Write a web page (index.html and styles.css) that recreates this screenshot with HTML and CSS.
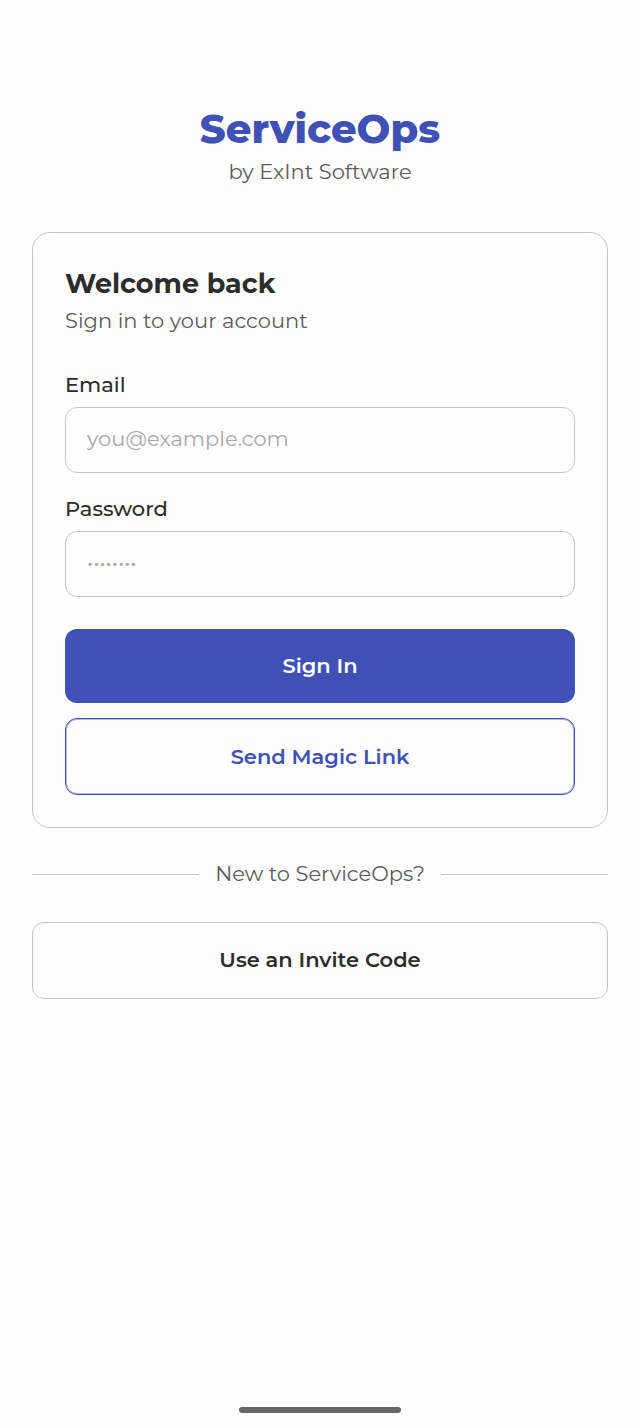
FILE: index.html
```html
<!DOCTYPE html>
<html lang="en">
<head>
<meta charset="utf-8">
<meta name="viewport" content="width=device-width, initial-scale=1">
<title>ServiceOps</title>
<link rel="stylesheet" href="styles.css">
</head>
<body>
<main class="page">
  <header class="brand">
    <h1 class="brand-name">ServiceOps</h1>
    <p class="brand-by">by ExInt Software</p>
  </header>
  <form class="card">
    <h2 class="card-title">Welcome back</h2>
    <p class="card-subtitle">Sign in to your account</p>
    <div class="field">
      <label class="label" for="email">Email</label>
      <input class="input" id="email" type="email" placeholder="you@example.com">
    </div>
    <div class="field">
      <label class="label" for="password">Password</label>
      <input class="input" id="password" type="password" placeholder="••••••••">
    </div>
    <div class="actions">
      <button class="button button-primary" type="submit">Sign In</button>
      <button class="button button-outline" type="button">Send Magic Link</button>
    </div>
  </form>
  <div class="divider"><span class="divider-text">New to ServiceOps?</span></div>
  <button class="button" type="button">Use an Invite Code</button>
</main>
<div class="home-bar"></div>
</body>
</html>
```
FILE: styles.css
```css
* {
  box-sizing: border-box;
}

body {
  margin: 0;
  min-height: 100vh;
  display: flex;
  flex-direction: column;
  background: #fefefe;
  color: #2c2c2c;
  font-family: Montserrat, "Open Sans", sans-serif;
  font-size: 21px;
  line-height: 28px;
}

h1, h2, p {
  margin: 0;
}

.page {
  flex: 1;
  display: flex;
  flex-direction: column;
  padding: 104px 32px 32px;
}

.brand {
  text-align: center;
  margin-bottom: 46px;
}

.brand-name {
  color: #3f51b5;
  font-size: 40px;
  line-height: 50px;
  font-weight: 800;
}

.brand-by, .card-subtitle, .divider-text {
  color: #5c5c5c;
}

.brand-by {
  margin-top: 4px;
}

.card {
  border: 1px solid #c4c4c4;
  border-radius: 18px;
  padding: 34px 32px 32px;
}

.card-title {
  font-size: 27px;
  line-height: 34px;
  font-weight: 700;
}

.card-subtitle {
  margin-top: 6px;
}

.field {
  margin-top: 22px;
}

.card-subtitle + .field {
  margin-top: 36px;
}

.label {
  display: block;
  font-weight: 500;
  margin-bottom: 8px;
}

.input {
  display: block;
  width: 100%;
  height: 66px;
  padding: 0 21px 4px;
  border: 1px solid #c4c4c4;
  border-radius: 12px;
  background: transparent;
  color: inherit;
  font: inherit;
}

.input::placeholder {
  color: #a8a8a8;
  opacity: 1;
}

.actions {
  display: grid;
  gap: 15px;
  margin-top: 32px;
}

.button {
  height: 77px;
  padding: 0 16px 2px;
  border: 1px solid #c4c4c4;
  border-radius: 12px;
  background: transparent;
  color: inherit;
  font: inherit;
  font-weight: 600;
}

.button-primary {
  height: 74px;
  padding-bottom: 0;
  border: 0;
  background: #3f51b5;
  color: #fff;
}

.button-outline {
  padding-bottom: 0;
  border-color: #3f51b5;
  box-shadow: inset 0 0 0 1px #3f51b566;
  color: #3f51b5;
}

.divider {
  display: flex;
  align-items: center;
  gap: 16px;
  margin: 32px 0 34px;
}

.divider::before, .divider::after {
  content: "";
  flex: 1;
  height: 1px;
  background: #c4c4c4;
}

.home-bar {
  align-self: center;
  width: 162px;
  height: 6px;
  margin-bottom: 15px;
  border-radius: 3px;
  background: #666;
}
```
